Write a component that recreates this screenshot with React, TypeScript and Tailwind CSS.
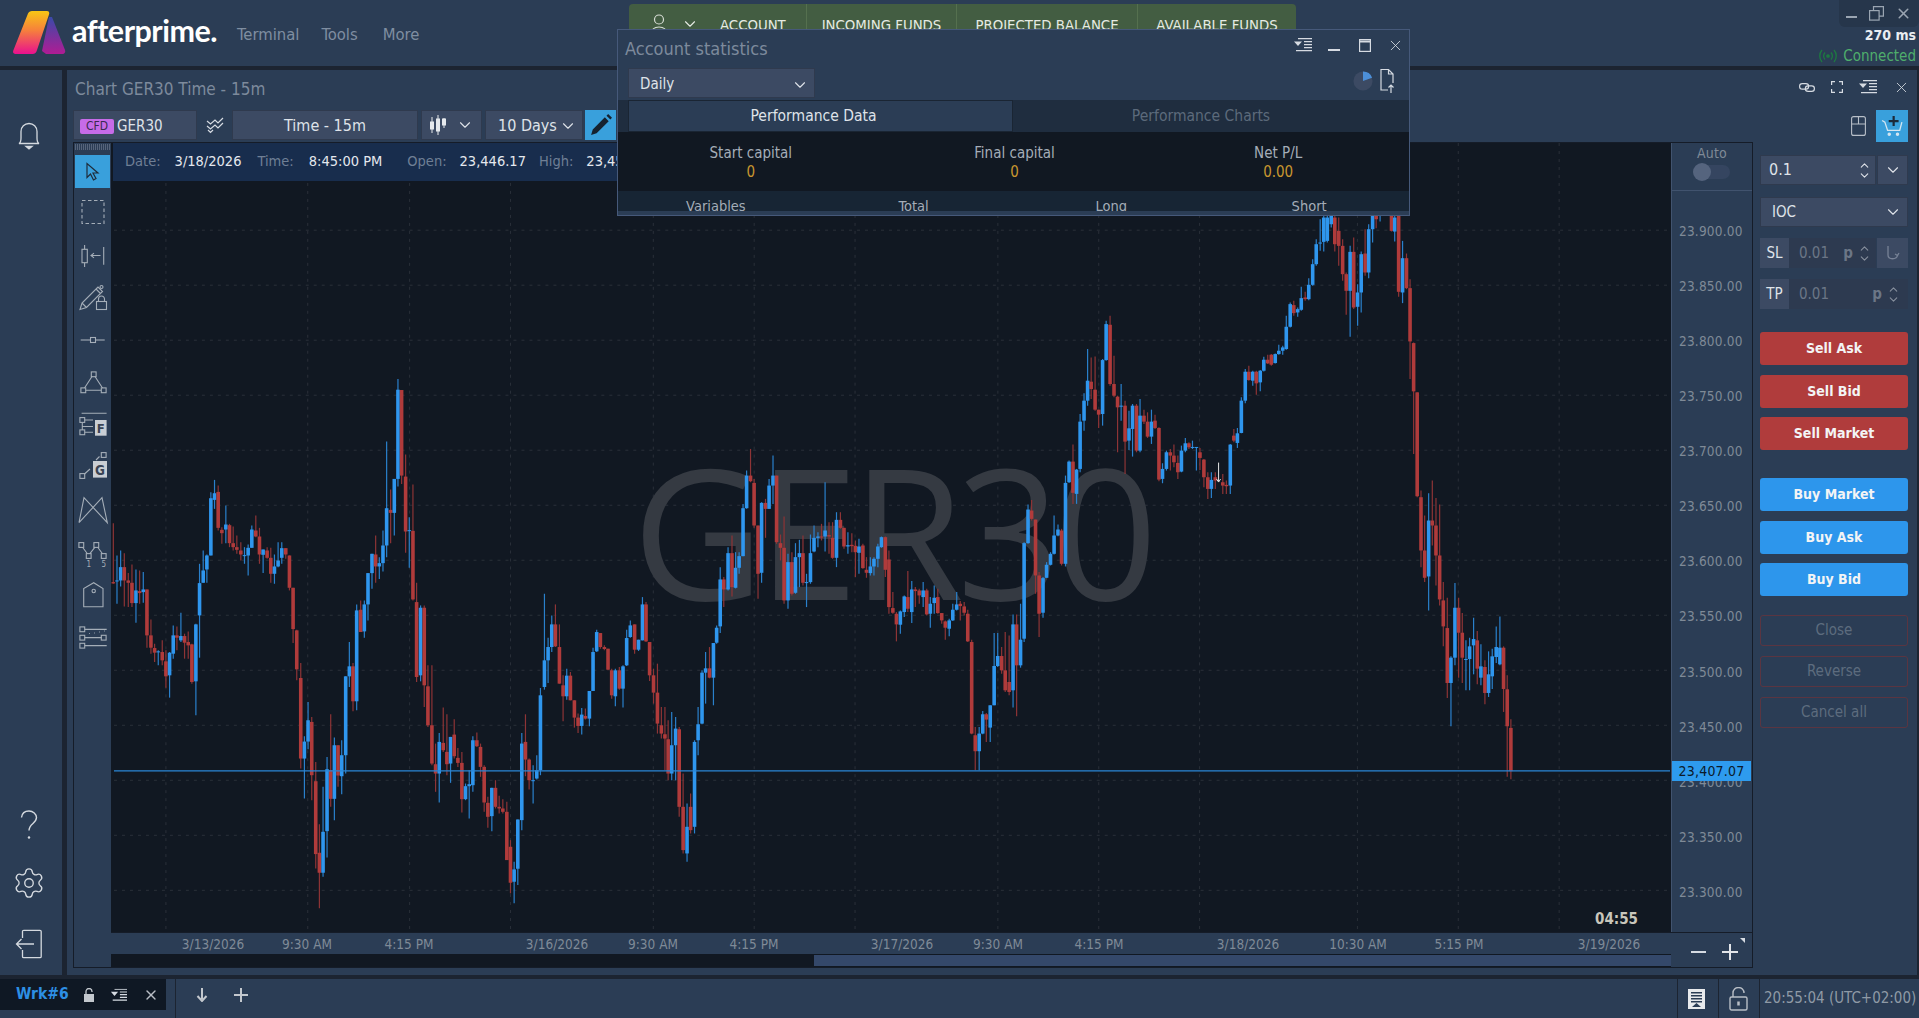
import { ChevronDown, ChevronUp, Settings, X } from 'lucide-react'
import type { ReactNode } from 'react'

// [x, blue?, top, bottom, wickTop, wickBottom], read off the reference in crop coordinates
type Row = [number, number, number, number, number, number]
type Seg = { x0: number; sx: number; y0: number; rows: Row[] }

const SEGS: Seg[] = [
  { x0: 110, sx: 3, y0: 350, rows: [
    [7,0,695,699,518,700],[18,1,690,692,615,760],[29,1,650,690,600,708],[40,0,650,690,608,768],[52,0,690,697,668,770],
    [63,0,697,758,642,770],[75,1,720,758,657,817],[86,0,722,728,660,760],[97,1,717,725,665,757],[108,0,717,855,717,892],
    [120,0,855,892,807,910],[131,0,893,907,880,935],[142,1,903,906,900,945],[154,0,905,930,870,945],[165,0,933,978,900,1012],
    [176,1,907,975,905,1042],[187,1,855,910,825,925],[198,0,855,862,828,900],[210,1,857,870,787,875],[221,0,857,877,850,925],
    [232,0,875,885,843,925],[243,0,882,995,880,1000],[255,1,822,993,820,1095],[266,1,698,795,640,922],[277,1,660,697,600,697],
    [288,1,615,657,612,697],[300,1,443,615,425,615],[311,1,428,448,388,475],[322,0,424,532,405,540],[333,0,538,548,530,580],
    [345,1,522,537,465,578],[356,0,524,578,520,590],[367,0,578,590,528,600],[378,0,590,598,555,610],[390,0,600,612,575,630],
    [401,1,614,617,590,640],[412,1,592,615,582,675],[423,1,537,592,525,592],[435,0,540,558,495,560],[446,0,558,612,532,640],
    [457,1,597,613,597,668],[469,0,600,622,590,625],[480,0,622,670,592,697],[491,1,648,670,612,700],[502,1,630,648,575,650],
    [513,1,593,622,575,640],[525,0,593,612,593,625],[536,0,615,712,615,720],[547,0,712,836,712,878],[558,0,840,957,838,990],
  ] },
  { x0: 110, sx: 3, y0: 600, rows: [
    [570,0,233,475,188,505],[581,1,424,475,408,595],[592,1,360,424,305,447],[603,0,365,525,350,600],[615,0,543,762,485,805],
    [626,0,758,818,672,925],[637,1,695,818,560,830],[649,1,507,693,470,772],[660,0,510,596,342,620],[671,1,435,596,412,660],
    [682,0,435,526,435,560],[693,1,465,528,420,582],[705,1,228,465,228,520],[716,1,198,228,125,260],[727,0,198,303,188,333],
    [738,1,30,303,12,330],[750,0,28,95,0,95],[761,1,12,93,0,112],[772,1,-82,12,-82,60],[784,1,-140,-82,-140,-35],
    [795,0,-138,-102,-195,-53],[806,1,-112,-102,-130,-64],[817,1,-165,-112,-210,-87],[828,1,-277,-165,-477,-130],[840,0,-272,-263,-333,-172],
    [851,1,-365,-263,-365,-195],[862,1,-633,-365,-665,-342],[873,0,-632,-375,-632,-350],[885,0,-372,-207,-438,-143],[896,1,-211,-209,-250,-98],
    [907,0,-209,-3,-348,0],[918,0,5,230,-53,245],[930,1,22,225,15,243],[941,0,22,255,15,320],[952,0,258,375,195,380],
    [964,0,375,490,195,495],[975,0,492,520,430,575],[986,1,425,520,398,607],[998,0,428,450,322,455],[1009,0,455,492,342,525],
    [1020,1,410,490,410,548],[1031,0,403,468,357,475],[1042,0,473,488,443,500],[1054,0,488,597,455,637],[1065,1,558,597,550,600],
    [1076,1,552,558,510,655],[1087,1,420,555,408,575],[1099,0,420,438,397,440],[1110,0,440,500,430,530],[1121,0,500,607,495,635],
    [1132,0,608,650,590,683],[1144,1,563,648,563,693],[1155,0,563,620,540,625],[1166,0,620,625,587,640],[1177,0,625,635,597,640],
    [1189,0,635,780,605,780],[1200,0,740,848,720,880],[1211,1,808,845,785,910],[1222,1,658,806,658,855],[1234,1,430,660,398,690],
    [1245,0,425,478,342,528],[1256,0,478,540,475,568],[1268,1,540,542,495,610],[1279,1,510,535,465,538],[1290,1,285,510,263,525],
    [1302,1,180,260,-20,268],[1313,1,140,180,112,248],[1324,1,72,140,45,155],[1335,0,72,138,12,140],[1347,0,140,250,72,250],
    [1358,0,255,288,225,363],[1369,1,226,288,205,298],[1380,0,226,300,215,300],[1392,0,300,352,300,382],[1403,0,352,377,340,398],
    [1414,1,343,377,323,403],[1425,0,347,355,325,358],[1437,1,272,355,272,378],[1448,1,155,272,142,272],[1459,1,95,153,88,155],
    [1470,0,98,140,98,145],[1482,0,140,146,135,150],[1493,0,145,208,145,210],[1504,0,210,285,205,295],[1515,1,210,288,205,318],
    [1527,0,210,265,200,268],[1538,1,198,265,195,322],[1549,1,113,195,88,197],[1560,1,75,110,60,112],
  ] },
  { x0: 610, sx: 2.8, y0: 440, rows: [
    [68,0,552,628,552,640],[79,1,598,628,598,632],[90,1,492,600,470,600],[100,0,492,603,485,605],[110,0,605,705,605,722],
    [121,0,705,757,685,790],[132,0,757,850,670,880],[143,0,855,880,800,895],[153,0,882,895,800,990],[162,0,897,1000,840,1020],
    [172,1,915,1000,815,1020],[183,1,865,915,830,1020],[193,0,867,1100,860,1130],[204,0,1100,1230,1000,1240],[215,1,1160,1240,1090,1265],
    [225,0,1100,1170,1060,1180],[236,1,905,1160,900,1180],[246,1,852,900,800,945],[257,1,697,850,690,852],[267,1,684,697,635,790],
    [278,0,684,712,620,714],[289,1,608,712,608,795],[298,1,562,607,555,610],[308,1,417,558,380,578],[318,0,417,447,410,500],
    [330,1,338,447,320,450],[341,0,338,440,285,468],[351,1,382,442,335,444],[361,1,347,382,335,400],[372,1,203,347,190,347],
    [382,1,105,203,90,205],[393,0,105,122,25,125],[403,0,127,255,115,262],[414,0,255,400,255,475],[424,1,187,397,185,427],
    [435,0,187,205,175,292],[445,1,135,205,115,205],[456,1,105,135,45,190],[466,0,105,305,105,310],[477,0,308,322,282,360],
    [487,0,322,480,228,490],[498,1,365,480,340,505],[509,0,365,460,335,465],[519,1,350,457,308,460],[530,1,338,350,298,440],
    [540,0,338,427,285,435],[550,1,425,428,400,500],[561,1,338,425,282,430],[571,1,292,333,255,335],[582,1,288,292,275,320],
    [592,0,288,291,250,300],[602,1,270,288,125,333],[613,0,284,288,245,340],[623,0,292,352,245,355],[634,1,238,352,215,380],
    [645,0,238,262,215,265],[655,0,262,318,262,325],[666,1,314,318,275,340],[677,0,313,317,278,335],[687,0,316,335,300,410],
    [697,1,318,337,295,400],[708,0,315,383,310,385],[718,0,388,397,350,412],[729,1,378,398,350,405],[739,1,355,378,350,405],
    [750,1,318,355,310,380],[760,1,290,320,288,322],[771,0,290,388,288,410],[781,0,357,500,330,520],[792,0,503,517,455,520],
    [802,0,520,552,515,603],[813,1,513,553,510,580],[824,1,468,515,465,530],[834,0,470,505,392,515],[845,1,447,515,422,548],
    [855,0,447,452,440,500],[866,0,450,465,445,490],[877,1,450,470,425,500],[887,0,450,522,445,525],[897,1,490,520,470,562],
    [908,1,472,488,435,520],[918,0,470,518,445,520],[929,0,518,540,518,550],[939,0,543,562,540,598],[950,1,540,565,535,588],
    [960,1,508,540,490,542],[971,1,492,508,455,510],[981,0,490,497,482,540],[992,0,498,517,485,525],[1002,0,520,603,508,605],
    [1013,0,605,880,598,882],[1023,0,885,933,860,990],[1034,1,880,933,860,990],[1044,1,822,880,812,882],[1054,0,822,838,818,905],
    [1065,1,795,862,795,905],[1076,1,677,795,578,795],[1086,1,647,677,578,680],[1097,0,647,690,620,700],[1107,0,690,750,575,755],
    [1118,0,725,755,585,765],[1129,1,552,750,522,802],[1139,0,552,675,522,828],[1150,1,598,675,490,682],[1160,1,308,595,305,605],
    [1171,1,207,308,192,310],[1181,0,210,235,178,240],[1192,0,237,405,237,460],[1202,0,405,520,395,590],[1213,1,413,517,410,532],
    [1223,1,373,412,365,412],[1234,1,340,373,335,375],[1244,1,285,340,225,342],[1255,1,267,285,252,287],[1265,0,270,370,265,375],
    [1276,1,127,370,105,378],[1286,1,63,125,60,127],[1297,0,63,157,12,190],[1307,1,87,160,85,190],
  ] },
  { x0: 960, sx: 2.8, y0: 210, rows: [
    [337,1,633,775,610,785],[348,1,570,630,548,660],[358,1,510,570,415,585],[368,0,513,535,440,565],[379,0,537,597,437,600],
    [389,0,597,612,597,652],[400,1,448,610,445,645],[410,1,340,448,330,450],[421,0,342,520,315,525],[432,0,520,555,435,560],
    [442,0,558,590,555,725],[452,1,585,588,520,630],[463,0,585,693,570,790],[474,1,653,690,600,718],[484,1,585,655,580,738],
    [495,0,585,720,580,725],[505,1,615,720,565,725],[516,0,615,633,597,640],[526,0,633,678,605,682],[537,1,633,678,597,700],
    [547,0,630,652,612,655],[558,0,652,807,650,812],[568,1,775,805,758,818],[579,1,725,775,720,780],[590,0,725,735,715,780],
    [600,0,735,755,702,770],[611,0,757,785,735,805],[621,1,720,783,705,785],[632,1,698,720,682,725],[642,0,698,710,695,715],
    [652,1,709,711,690,715],[663,1,709,711,709,780],[673,0,725,742,712,778],[684,0,747,800,745,830],[695,0,800,835,785,865],
    [705,1,808,835,785,862],[716,0,800,810,785,835],[737,0,815,825,790,850],[747,0,823,827,810,850],[758,1,702,825,700,850],
    [768,0,675,690,655,695],[778,1,668,697,652,712],[789,1,570,667,560,668],[800,1,483,570,475,578],[810,0,483,508,465,510],
    [821,1,483,510,480,525],[831,0,483,518,480,552],[842,1,480,515,478,542],[852,1,447,480,438,482],[863,0,447,458,432,460],
    [873,0,432,462,430,465],[884,1,430,457,428,458],[894,1,420,430,402,432],[905,1,410,420,405,432],[915,1,348,415,315,417],
    [926,1,280,348,275,350],[936,0,283,307,270,315],[947,1,295,305,290,318],[957,1,262,297,228,300],[968,0,260,265,243,270],
    [978,1,222,265,202,268],[989,1,160,222,145,225],[999,1,100,160,85,165],[1010,1,95,97,25,120],[1020,1,20,93,0,122],
    [1030,1,20,90,0,95],[1041,1,0,40,0,50],[1051,0,20,100,0,122],[1062,0,60,105,20,165],[1073,0,105,190,85,210],
    [1083,0,190,240,185,312],[1094,1,123,240,105,378],[1104,0,123,290,80,295],[1115,1,245,288,220,345],[1125,1,130,245,122,305],
    [1136,0,128,185,55,195],[1146,1,55,185,40,202],[1157,1,15,55,0,95],[1167,0,0,25,0,52],[1178,1,0,15,0,32],
    [1210,0,15,60,0,62],[1219,1,20,62,0,92],[1230,0,15,243,0,258],[1241,1,142,245,90,277],[1252,0,142,232,128,235],
    [1262,0,232,392,205,505],[1272,0,397,542,395,730],[1282,0,545,857,545,860],
  ] },
  { x0: 1380, sx: 3, y0: 400, rows: [
    [125,0,290,450,270,500],[136,0,450,532,345,545],[148,1,360,528,278,630],[159,0,360,375,240,435],[170,0,375,465,292,555],
    [181,0,465,597,312,615],[192,0,600,678,545,738],[204,0,683,848,592,893],[215,1,772,848,768,978],[227,1,622,772,548,795],
    [238,0,622,697,592,832],[249,0,697,772,638,848],[260,1,776,779,720,870],[271,1,738,776,712,870],[283,1,716,735,652,822],
    [294,0,720,805,692,852],[305,1,798,832,732,855],[317,0,800,878,780,912],[328,1,822,878,753,890],[339,1,768,828,745,866],
    [351,1,740,770,678,788],[362,1,742,792,648,795],[373,0,742,866,738,935],[384,0,867,978,825,1130],[395,0,983,1113,957,1137],
  ] },
]

const PRICES = ['23.900.00','23.850.00','23.800.00','23.750.00','23.700.00','23.650.00','23.600.00','23.550.00','23.500.00','23.450.00','23.400.00','23.350.00','23.300.00']
const V_GRID = [165, 307, 409, 510, 653, 754, 855, 998, 1099, 1200, 1358, 1459, 1560]
const H_GRID = PRICES.map((_, i) => 229.3 + i * 55.08)
const TIME_LABELS: [string, number][] = [
  ['3/13/2026', 213], ['9:30 AM', 307], ['4:15 PM', 409], ['3/16/2026', 557], ['9:30 AM', 653], ['4:15 PM', 754],
  ['3/17/2026', 902], ['9:30 AM', 998], ['4:15 PM', 1099], ['3/18/2026', 1248], ['10:30 AM', 1358], ['5:15 PM', 1459], ['3/19/2026', 1609],
]

function Candles() {
  return (
    <svg viewBox="111 142 1560 790" className="absolute inset-0 h-full w-full">
      {V_GRID.map((x) => (
        <line key={x} x1={x} x2={x} y1={142} y2={932} stroke="#2a3039" strokeWidth="1" strokeDasharray="3 5" />
      ))}
      {H_GRID.map((y) => (
        <line key={y} x1={113} x2={1671} y1={y} y2={y} stroke="#2a3039" strokeWidth="1" strokeDasharray="3 5" />
      ))}
    </svg>
  )
}

function CandleLayer() {
  return (
    <svg viewBox="111 142 1560 790" className="absolute inset-0 h-full w-full">
      {SEGS.flatMap((s, si) =>
        s.rows.map(([x, up, top, bot, wt, wb], i) => {
          const cx = s.x0 + x / s.sx
          const color = up ? '#2f96ee' : '#b03b3b'
          const t = s.y0 + top / 3
          const b = s.y0 + bot / 3
          return (
            <g key={`${si}-${i}`}>
              <line x1={cx} x2={cx} y1={s.y0 + wt / 3} y2={s.y0 + wb / 3} stroke={up ? '#2a80cc' : '#8e3436'} strokeWidth="1.2" />
              <rect x={cx - 1.8} y={t} width="3.6" height={Math.max(b - t, 1)} fill={color} />
            </g>
          )
        }),
      )}
      <line x1="113" x2="1671" y1="770.7" y2="770.7" stroke="#2a86d6" strokeWidth="1.3" />
      <path d="M1219 462v19m-2-2.5 2 3 2-3" fill="none" stroke="#e8e8e8" strokeWidth="1" />
    </svg>
  )
}

const toolStroke = { fill: 'none', stroke: '#a5aeb8', strokeWidth: 1.1 }

function Sq({ x, y, r = 2.4 }: { x: number; y: number; r?: number }) {
  return <rect x={x - r} y={y - r} width={r * 2} height={r * 2} {...toolStroke} />
}

const TOOLS: ReactNode[] = [
  <rect key="a" x="7" y="6.5" width="22" height="23" {...toolStroke} strokeDasharray="3.5 2.5" />,
  <g key="b" {...toolStroke}>
    <rect x="7" y="12.3" width="5.3" height="13.4" />
    <path d="M9.6 8v4.3M9.6 25.7V30M28.7 10v17.7M25.5 18.5H16m3-2.4-3 2.4 3 2.4" />
  </g>,
  <g key="c" {...toolStroke}>
    <path d="M5 30.5l2-6.5L23 8l4.5 4.5L11.5 28.5zM7 24l4.5 4.5M21 10l4.5 4.5" />
    <circle cx="26.5" cy="8" r="1.5" />
    <rect x="21.5" y="22.5" width="10" height="8" fill="#2b3d55" />
    <path d="M23.5 22.5V20a3 3 0 0 1 6 0v2.5" />
  </g>,
  <g key="d" {...toolStroke}>
    <path d="M5.7 18h24" />
    <rect x="15.5" y="15.5" width="5" height="5" fill="#2b3d55" />
  </g>,
  <g key="e" {...toolStroke}>
    <path d="M17 12.5 9.5 24M20 12.5 27.5 24M11 26.3h15" />
    <Sq x={18.7} y={10.3} />
    <Sq x={8.3} y={26.3} />
    <Sq x={28.7} y={26.3} />
  </g>,
  <g key="f">
    <g {...toolStroke}>
      <path d="M6.6 6.3h25M9.7 13H18M9.7 25.3H18M7.3 15.4v7.5M7.3 19.5H18" />
      <Sq x={7.3} y={13} />
      <Sq x={7.3} y={25.3} />
    </g>
    <rect x="20" y="13" width="11.6" height="15.7" fill="#c9ced4" />
    <text x="25.8" y="26" textAnchor="middle" fontSize="13" fontWeight="700" fill="#3a4454">F</text>
  </g>,
  <g key="g">
    <g {...toolStroke}>
      <path d="M9.5 25 15 20M21 11l3.5-3.5" />
      <Sq x={28.7} y={6} />
      <Sq x={7.3} y={27} />
    </g>
    <rect x="18" y="12" width="14" height="16.6" fill="#c9ced4" />
    <text x="25" y="25.5" textAnchor="middle" fontSize="13.5" fontWeight="700" fill="#3a4454">G</text>
  </g>,
  <path key="h" d="M4 30.7 9 5.7 32.3 30.7 27 5.7 4 30.7" {...toolStroke} />,
  <g key="i" {...toolStroke}>
    <path d="M7.6 13.2l4.8 6.6M14.7 19.8l5.3-6.6M22.7 13.2l4.8 6.6" />
    <Sq x={6.3} y={11} />
    <Sq x={13.7} y={22} />
    <Sq x={21.3} y={11} />
    <Sq x={28.7} y={22} />
    <text x="13.7" y="33" textAnchor="middle" fontSize="8" fill="#a5aeb8" stroke="none">1</text>
    <text x="28.7" y="33" textAnchor="middle" fontSize="8" fill="#a5aeb8" stroke="none">5</text>
  </g>,
  <g key="j" {...toolStroke}>
    <path d="M8.7 29.7V11.5l10-5.800 9.3 5.800v18.200z" />
    <circle cx="18.7" cy="14" r="1.7" />
  </g>,
  <g key="k" {...toolStroke}>
    <path d="M9.7 10.3h22M9.7 18.7h17M9.7 26.7h22" strokeWidth="1.3" />
    <path d="M14 14.5h.8M19 14h.8M24 13h.8M29 12h.8" />
    <Sq x={7.3} y={10.3} />
    <Sq x={7.3} y={18.7} />
    <Sq x={7.3} y={26.7} />
    <Sq x={28.7} y={18.7} />
  </g>,
]

function MenuIcon() {
  return (
    <svg viewBox="0 0 18 14" className="h-[14px] w-[18px]" fill="#d6dbe2">
      <path d="M0 3.5h8L4 8zM4 0h14v1.3H4zM10 3h8v1.3h-8zM10 6h8v1.3h-8zM10 9h8v1.3h-8zM2 12h16v1.3H2z" />
    </svg>
  )
}

function Select({ label, className }: { label: string; className: string }) {
  return (
    <div className={`flex items-center justify-between border border-[#2f3a4e] bg-[#3c4a63] ${className}`}>
      <span className="text-[15px] text-[#dfe3e9]">{label}</span>
      <ChevronDown className="h-[18px] w-[18px] text-[#dfe3e9]" strokeWidth={1.5} />
    </div>
  )
}

function Spin() {
  return (
    <div className="flex flex-col items-center text-[#dfe3e9] -space-y-[3px]">
      <ChevronUp className="h-[13px] w-[13px]" strokeWidth={2} />
      <ChevronDown className="h-[13px] w-[13px]" strokeWidth={2} />
    </div>
  )
}

function Header() {
  return (
    <header className="flex h-[66px] shrink-0 bg-[#2b3d55]">
      <svg viewBox="0 0 53 43" className="ml-[13px] mt-[11px] h-[43px] w-[53px] shrink-0">
        <defs>
          <linearGradient id="la" x1="0" y1="0" x2="0" y2="1">
            <stop offset="0" stopColor="#f7c614" />
            <stop offset="0.45" stopColor="#f6803c" />
            <stop offset="1" stopColor="#e9108f" />
          </linearGradient>
          <linearGradient id="lb" x1="0" y1="0" x2="0" y2="1">
            <stop offset="0" stopColor="#3a4aa8" />
            <stop offset="1" stopColor="#b01c94" />
          </linearGradient>
        </defs>
        <path d="M36 6h3l13 33c.8 2.2-.4 4-2.6 4H33l-4-3z" fill="url(#lb)" />
        <path d="M15 2.5C15.8 1 17 0 19 0h15c2 0 2.6 1.6 2 3.500L24 39c-.7 2.400-2 4-4.500 4H2.500C.5 43-.4 41.500.3 39.500z" fill="url(#la)" />
      </svg>
      <div className="ml-[6px] mt-[12px] h-[36px] w-[160px] font-['Lato',sans-serif] text-[30.5px] font-bold leading-[36px] tracking-[-0.5px] text-white">
        afterprime.
      </div>
      <nav className="ml-[5px] mt-[26px] flex h-[18px] w-[187px] items-center text-[16.5px] text-[#7f8ea1]">
        <span>Terminal</span>
        <span className="ml-[22px]">Tools</span>
        <span className="ml-[25px]">More</span>
      </nav>
      <div className="ml-[205px] mt-[4px] flex h-[40px] w-[667px] shrink-0 items-start rounded-t-[4px] bg-[#435d42] text-[14.8px] leading-[42px] text-[#e6ebe4]">
        <div className="flex h-full w-[178px] items-start border-r border-[#55704f]">
          <svg viewBox="0 0 20 22" className="ml-[20px] mt-[9px] h-[22px] w-[20px]" fill="none" stroke="#d7ddd5" strokeWidth="1.2">
            <circle cx="10" cy="6.5" r="4.5" />
            <path d="M2 21c.5-5 4-7 8-7s7.5 2 8 7" />
          </svg>
          <ChevronDown className="ml-[12px] mt-[11px] h-[18px] w-[18px]" strokeWidth={1.5} />
          <span className="ml-[21px]">ACCOUNT</span>
        </div>
        <div className="h-full w-[150px] border-r border-[#55704f] text-center">INCOMING FUNDS</div>
        <div className="h-full w-[181px] border-r border-[#55704f] text-center">PROJECTED BALANCE</div>
        <div className="h-full flex-1 text-center">AVAILABLE FUNDS</div>
      </div>
      <div className="ml-auto flex w-[110px] flex-col items-end">
        <div className="flex h-[27px] w-[80px] items-center justify-between rounded-bl-[6px] rounded-br-[6px] bg-[#26364b] px-[7px] text-[#9aa5b2]">
          <span className="mt-[6px] h-[2px] w-[11px] bg-[#9aa5b2]" />
          <svg viewBox="0 0 15 15" className="h-[15px] w-[15px]" fill="none" stroke="#9aa5b2" strokeWidth="1.2">
            <rect x="0.6" y="4.6" width="9.5" height="9.5" />
            <path d="M4.5 4.5V.6h9.9v9.5h-4.3" />
          </svg>
          <X className="h-[17px] w-[17px]" strokeWidth={2.2} />
        </div>
        <div className="mr-[3px] h-[16px] text-[14px] font-bold leading-[16px] text-[#e9edf1]">270 ms</div>
        <div className="mr-[3px] mt-[4px] flex h-[18px] items-center text-[15px] leading-[18px] text-[#4fae6c]">
          <svg viewBox="0 0 20 14" className="mr-[5px] h-[14px] w-[20px]" fill="none" stroke="#1d7a41" strokeWidth="1.3">
            <path d="M4 1C1 4.5 1 9.5 4 13M7 3.5c-1.6 2-1.6 5 0 7M16 1c3 3.5 3 8.5 0 12M13 3.5c1.6 2 1.6 5 0 7" />
            <circle cx="10" cy="7" r="1.2" fill="#1d7a41" />
          </svg>
          Connected
        </div>
      </div>
    </header>
  )
}

function Rail() {
  return (
    <aside className="flex w-[62px] shrink-0 flex-col items-center bg-[#2b3d55] pr-[4px] text-[#c8ced6]">
      <svg viewBox="0 0 22 28" className="mt-[52px] h-[28px] w-[22px]" fill="none" stroke="#d4d9df" strokeWidth="1.3">
        <path d="M1 21.5c2-1 2-3 2-5.500V9.5C3 5 6.5 1.5 11 1.5S19 5 19 9.5V16c0 2.500 0 4.500 2 5.500z" />
        <path d="M8 24.5h6L11 27z" fill="#d4d9df" />
      </svg>
      <svg viewBox="0 0 18 30" className="mt-auto h-[30px] w-[18px]" fill="none" stroke="#d4d9df" strokeWidth="1.4">
        <path d="M1.5 7.5C2 3.5 5 1 9 1s7.5 3 7.5 6.5c0 6-7.5 6-7.5 13" />
        <circle cx="9" cy="27.5" r="1.2" fill="#d4d9df" stroke="none" />
      </svg>
      <Settings className="mt-[26px] h-[34px] w-[34px] text-[#d4d9df]" strokeWidth={0.95} />
      <svg viewBox="0 0 28 30" className="mb-[16px] mt-[29px] h-[30px] w-[28px]" fill="none" stroke="#d4d9df" strokeWidth="1.3">
        <path d="M7.5 9V2.5c0-.8.5-1.200 1.200-1.200H25c.8 0 1.200.5 1.200 1.200v25c0 .8-.5 1.200-1.200 1.200H8.700c-.7 0-1.200-.5-1.200-1.200V21" />
        <path d="M19 15H1.5m5-5-5 5 5 5" />
      </svg>
    </aside>
  )
}

function TradeButton({ label, tone }: { label: string; tone: 'red' | 'blue' }) {
  return (
    <div className={`flex h-[33px] items-center justify-center rounded-[3px] text-[14px] font-bold text-[#f3f4f5] ${tone === 'red' ? 'bg-[#b03c3c]' : 'bg-[#2d96ec]'}`}>
      {label}
    </div>
  )
}

function GhostButton({ label }: { label: string }) {
  return (
    <div className="flex h-[31px] items-center justify-center rounded-[3px] border border-[#5a3541] text-[15px] text-[#5d6c7e]">
      {label}
    </div>
  )
}

function TradePanel() {
  return (
    <div className="flex w-[164px] shrink-0 flex-col pl-[7px] pr-[9px]">
      <div className="flex h-[32px] items-center justify-end">
        <svg viewBox="0 0 15 20" className="mr-[10px] h-[20px] w-[15px]" fill="none" stroke="#b8bfc8" strokeWidth="1.1">
          <rect x="0.6" y="0.6" width="13.8" height="18.8" rx="2" />
          <path d="M0.6 8h13.8M7.5 0.6V8" />
        </svg>
        <div className="flex h-[32px] w-[32px] items-center justify-center bg-[#39a0dc]">
          <svg viewBox="0 0 20 20" className="h-[22px] w-[22px]" fill="none" stroke="#d3e6f2" strokeWidth="1.2">
            <path d="M1 5l2.5 1.5L6 14h11l2-7.5" />
            <circle cx="7.5" cy="17.5" r="1" fill="#d3e6f2" />
            <circle cx="15" cy="17.5" r="1" fill="#d3e6f2" />
            <path d="M11.5 1v9M7 5.5h9" stroke="#1c2a3a" strokeWidth="2" />
          </svg>
        </div>
      </div>
      <div className="mt-[13px] flex h-[30px] gap-[1px]">
        <div className="flex w-[116px] items-center justify-between border border-[#2f3a4e] bg-[#3c4a63] pl-[8px] pr-[4px] text-[16px] text-[#dfe3e9]">
          0.1
          <Spin />
        </div>
        <div className="flex flex-1 items-center justify-center border border-[#2f3a4e] bg-[#3c4a63] text-[#dfe3e9]">
          <ChevronDown className="h-[18px] w-[18px]" strokeWidth={1.5} />
        </div>
      </div>
      <Select label="IOC" className="mt-[12px] h-[30px] pl-[11px] pr-[5px]" />
      <div className="mt-[11px] flex h-[30px]">
        <div className="flex w-[29px] items-center justify-center bg-[#3c4a63] text-[15px] text-[#dfe3e9]">SL</div>
        <div className="flex w-[87px] items-center bg-[#2d3a50] pl-[10px] pr-[5px] text-[15px] text-[#6b7686]">
          <span>0.01</span>
          <span className="ml-auto mr-[5px] font-bold">p</span>
          <div className="opacity-50"><Spin /></div>
        </div>
        <div className="ml-[1px] flex flex-1 items-center justify-center bg-[#3c4a63]">
          <svg viewBox="0 0 14 16" className="h-[16px] w-[14px]" fill="none" stroke="#778296" strokeWidth="1.3">
            <path d="M2 1v9c0 5 9 5 9.5 0M9 9l2.5 1.5L13 8" />
          </svg>
        </div>
      </div>
      <div className="mt-[11px] flex h-[30px]">
        <div className="flex w-[29px] items-center justify-center bg-[#3c4a63] text-[15px] text-[#dfe3e9]">TP</div>
        <div className="flex flex-1 items-center bg-[#2d3a50] pl-[10px] pr-[8px] text-[15px] text-[#6b7686]">
          <span>0.01</span>
          <span className="ml-auto mr-[5px] font-bold">p</span>
          <div className="opacity-50"><Spin /></div>
        </div>
      </div>
      <div className="mt-[23px] flex flex-col gap-[9.5px]">
        <TradeButton label="Sell Ask" tone="red" />
        <TradeButton label="Sell Bid" tone="red" />
        <TradeButton label="Sell Market" tone="red" />
      </div>
      <div className="mt-[28px] flex flex-col gap-[9.5px]">
        <TradeButton label="Buy Market" tone="blue" />
        <TradeButton label="Buy Ask" tone="blue" />
        <TradeButton label="Buy Bid" tone="blue" />
      </div>
      <div className="mt-[19px] flex flex-col gap-[10px]">
        <GhostButton label="Close" />
        <GhostButton label="Reverse" />
        <GhostButton label="Cancel all" />
      </div>
    </div>
  )
}

function StatsWindow() {
  return (
    <section className="absolute left-[617px] top-[29px] z-20 flex h-[187px] w-[793px] flex-col border border-[#46597a] bg-[#2b3d55]">
      <div className="flex h-[38px] shrink-0 items-center justify-between pl-[7px]">
        <span className="-mt-[2px] text-[18px] text-[#7d8a9c]">Account statistics</span>
        <div className="-mr-[2px] -mt-[8px] flex items-center text-[#d6dbe2]">
          <div className="flex w-[31px] justify-center"><MenuIcon /></div>
          <div className="flex w-[31px] justify-center"><span className="mt-[9px] h-[2px] w-[12px] bg-[#d6dbe2]" /></div>
          <div className="flex w-[31px] justify-center">
            <svg viewBox="0 0 12 13" className="h-[13px] w-[12px]" fill="none" stroke="#d6dbe2" strokeWidth="1.2">
              <rect x="0.6" y="0.6" width="10.8" height="11.8" />
              <path d="M0.6 2.5h10.8" strokeWidth="2" />
            </svg>
          </div>
          <div className="flex w-[31px] justify-center"><X className="h-[17px] w-[17px]" strokeWidth={1.2} /></div>
        </div>
      </div>
      <div className="flex h-[31px] shrink-0 items-start justify-between pl-[10px] pr-[14px]">
        <Select label="Daily" className="h-[30px] w-[187px] pl-[11px] pr-[5px] pt-[3px]" />
        <div className="flex items-center gap-[6px]">
          <svg viewBox="0 0 22 28" className="h-[26px] w-[20px]">
            <circle cx="11" cy="14" r="10.5" fill="#3c4a63" />
            <path d="M11 3.5A10.5 10.5 0 0 1 21 10.5L11 14z" fill="#4c8fd8" />
          </svg>
          <svg viewBox="0 0 16 26" className="h-[26px] w-[16px]" fill="none" stroke="#d6dbe2" strokeWidth="1.2">
            <path d="M9 22H2V1.5h7.5L14 6v9M9.5 1.5V6H14M12 25v-8m-2.5 2.5L12 17l2.5 2.5" />
          </svg>
        </div>
      </div>
      <div className="mt-[1px] flex h-[32px] shrink-0 bg-[#1f2d3f] pl-[10px]">
        <div className="flex w-[385px] items-center justify-center border border-[#1a2533] bg-[#2b3d55] pr-[14px] pt-[2px] text-[15.5px] text-[#dfe3e9]">
          Performance Data
        </div>
        <div className="flex flex-1 items-center justify-center pr-[20px] pt-[2px] text-[15.5px] text-[#5c6a7b]">Performance Charts</div>
      </div>
      <div className="grid h-[59px] shrink-0 grid-cols-3 bg-[#111822] pt-[12px] text-center text-[15px] leading-[19px] text-[#a4adb8]">
        {[['Start capital', '0'], ['Final capital', '0'], ['Net P/L', '0.00']].map(([k, v]) => (
          <div key={k} className="pl-[2px]">
            <div>{k}</div>
            <div className="text-[#c8962f]">{v}</div>
          </div>
        ))}
      </div>
      <div className="grid h-[20px] shrink-0 grid-cols-4 overflow-hidden bg-[#172534] pt-[6px] text-center text-[14.5px] leading-[19px] text-[#a4adb8]">
        {['Variables', 'Total', 'Long', 'Short'].map((t) => (
          <div key={t} className="-ml-[2px]">{t}</div>
        ))}
      </div>
    </section>
  )
}

function ChartToolbar() {
  return (
    <div className="mb-[2px] flex h-[30px] shrink-0 text-[15px] text-[#dfe3e9]">
      <div className="flex w-[124px] items-center border border-[#2f3a4e] bg-[#3c4a63] pl-[6px] pt-[2px]">
        <span className="rounded-[2px] bg-[#c76be8] px-[6px] text-[12px] leading-[15px] text-[#3b2a50]">CFD</span>
        <span className="ml-[3px]">GER30</span>
      </div>
      <div className="flex w-[35px] items-center justify-center">
        <svg viewBox="0 0 18 18" className="h-[18px] w-[18px]" fill="none" stroke="#d6dbe2" strokeWidth="1.2">
          <path d="M1 5l3.500 3L9 4l3 3 5-5M1 10l3.500 3L9 9l3 3 5-5M2 14l2.500 2.500L7 14" />
        </svg>
      </div>
      <div className="flex w-[186px] items-center justify-center border border-[#2f3a4e] bg-[#3c4a63] pt-[2px] text-[16px]">Time - 15m</div>
      <div className="ml-[3px] flex w-[61px] items-center justify-center gap-[9px] border border-[#2f3a4e] bg-[#3c4a63]">
        <svg viewBox="0 0 18 20" className="h-[20px] w-[18px]" fill="#e6e9ed" stroke="#e6e9ed" strokeWidth="1">
          <path d="M3 2v16M9 0v20M15 3v10" />
          <rect x="1.5" y="7" width="3" height="7" />
          <rect x="7.5" y="4" width="3" height="12" />
          <rect x="13.5" y="4" width="3" height="6" />
        </svg>
        <ChevronDown className="h-[18px] w-[18px]" strokeWidth={1.5} />
      </div>
      <div className="ml-[3px] flex w-[98px] items-center justify-between border border-[#2f3a4e] bg-[#3c4a63] pl-[12px] pr-[5px] pt-[2px] text-[16px]">
        10 Days
        <ChevronDown className="h-[18px] w-[18px]" strokeWidth={1.5} />
      </div>
      <div className="ml-[2px] flex w-[31px] items-center justify-center bg-[#39a0dc]">
        <svg viewBox="0 0 20 20" className="h-[22px] w-[22px]" fill="#16222f">
          <path d="M1 19l1.5-5L13.5 3l3.500 3.500L6 17.500zM15 1.500 16.500 0 20 3.500 18.500 5z" />
        </svg>
      </div>
    </div>
  )
}

function Plot() {
  return (
    <div className="relative flex-1 bg-[#111822]">
      <Candles />
      <div className="absolute left-[521px] top-[295px] font-['Open_Sans',sans-serif] text-[182px] leading-none tracking-[-7px] text-[#353a42] [font-stretch:normal]">GER30</div>
      <CandleLayer />
      <div className="absolute left-[2px] top-0 flex h-[38px] w-[640px] items-center bg-[#182d4d] pl-[12px] text-[14.5px] text-[#e4e8ee]">
        <span className="text-[#6f7f95]">Date:</span>
        <span className="ml-[14px]">3/18/2026</span>
        <span className="ml-[16px] text-[#6f7f95]">Time:</span>
        <span className="ml-[15px]">8:45:00 PM</span>
        <span className="ml-[25px] text-[#6f7f95]">Open:</span>
        <span className="ml-[13px]">23,446.17</span>
        <span className="ml-[13px] text-[#6f7f95]">High:</span>
        <span className="ml-[13px]">23,459.31</span>
      </div>
      <div className="absolute bottom-[2px] right-[33px] text-[15px] font-bold text-[#c9c6bb]">04:55</div>
    </div>
  )
}

function PriceScale() {
  return (
    <div className="relative w-[81px] shrink-0 border-l border-[#41536e] bg-[#2b3d55] text-[13.5px] tracking-[0.2px] text-[#7f8a97]">
      <div className="flex h-[48px] flex-col items-center border-b border-[#41536e] pt-[2px]">
        <span className="text-[14px] leading-[16px]">Auto</span>
        <div className="relative mt-[4px] h-[14px] w-[36px] rounded-full bg-[#354560]">
          <div className="absolute -left-[1px] -top-[2px] h-[18px] w-[18px] rounded-full bg-[#55647e]" />
        </div>
      </div>
      {PRICES.map((p, i) => (
        <div key={p} className={`flex h-[55.08px] items-center pl-[7px] ${i === 0 ? 'mt-[12.5px]' : ''}`}>
          {p}
        </div>
      ))}
      <div className="absolute left-0 top-[618px] flex h-[20px] w-[79px] items-center justify-center bg-[#2e9bee] text-[14px] text-[#0c1a2a]">
        23,407.07
      </div>
    </div>
  )
}

function TimeAxis() {
  return (
    <div className="relative h-[21px] bg-[#2b3d55] text-[13.5px] text-[#7f8a97]">
      {TIME_LABELS.map(([t, x], i) => (
        <span key={i} className="absolute top-[1px] -translate-x-1/2 whitespace-nowrap leading-[21px]" style={{ left: x - 111 }}>
          {t}
        </span>
      ))}
    </div>
  )
}

function ChartFrame() {
  return (
    <div className="flex h-[826px] border border-[#151c28]">
      <div className="flex w-[37px] shrink-0 flex-col">
        <div className="mx-[1px] mt-[1px] h-[6px] bg-[repeating-linear-gradient(90deg,#56647a_0_1px,transparent_1px_2px)]" />
        <div className="ml-[1px] mr-[1px] mt-[5px] flex h-[33px] items-center justify-center bg-[#39a0dc]">
          <svg viewBox="0 0 16 20" className="h-[20px] w-[16px]" fill="none" stroke="#1f2c3a" strokeWidth="1.2">
            <path d="M2 1.5v14l3.5-3.5 3 6 2.5-1.5-3-5.500h5z" />
          </svg>
        </div>
        <div className="mt-[3px] flex flex-col">
          {TOOLS.map((icon, i) => (
            <div key={i} className="flex h-[42.5px] items-center justify-center">
              <svg viewBox="0 0 36 36" className="h-[36px] w-[36px]">{icon}</svg>
            </div>
          ))}
        </div>
      </div>
      <div className="flex min-w-0 flex-1 flex-col">
        <div className="flex h-[790px] border-b border-[#151c28]">
          <Plot />
          <PriceScale />
        </div>
        <div className="flex flex-1">
          <div className="flex flex-1 flex-col">
            <TimeAxis />
            <div className="flex flex-1 justify-end bg-[#111822] py-[1px]">
              <div className="w-[857px] bg-[#34486a]" />
            </div>
          </div>
          <div className="relative flex w-[81px] shrink-0 items-start justify-center gap-[16px] bg-[#2b3d55] pl-[6px] pt-[11px]">
            <span className="mt-[7px] h-[2px] w-[15px] bg-[#d6dbe2]" />
            <svg viewBox="0 0 16 16" className="h-[16px] w-[16px]" fill="#e2e5e9">
              <path d="M7 0h2v7h7v2H9v7H7V9H0V7h7z" />
            </svg>
            <span className="absolute right-[7px] top-[5px] h-0 w-0 border-l-[5px] border-t-[5px] border-l-transparent border-t-[#d6dbe2]" />
          </div>
        </div>
      </div>
    </div>
  )
}

function Footer() {
  return (
    <footer className="mt-[4px] flex h-[39px] shrink-0 bg-[#2b3d55]">
      <div className="flex h-[31px] w-[166px] items-center bg-[#0f1824] pl-[16px]">
        <span className="text-[15.5px] font-bold text-[#2d8fe4]">Wrk#6</span>
        <svg viewBox="0 0 12 14" className="ml-[14px] h-[14px] w-[12px]" fill="#c3c8ce">
          <path d="M1 6h10v8H1z" />
          <path d="M3 6V3.5a3 3 0 0 1 6 0V4" fill="none" stroke="#c3c8ce" strokeWidth="1.3" />
        </svg>
        <div className="ml-[15px] scale-90"><MenuIcon /></div>
        <X className="ml-[15px] h-[16px] w-[16px] text-[#b9bec5]" strokeWidth={2} />
      </div>
      <div className="flex w-[10px] border-r border-[#1c2431]" />
      <svg viewBox="0 0 12 14" className="ml-[20px] mt-[9px] h-[14px] w-[12px]" fill="none" stroke="#c3c8ce" strokeWidth="2">
        <path d="M6 0v11M1.5 8 6 13l4.5-5" />
      </svg>
      <svg viewBox="0 0 14 14" className="ml-[26px] mt-[9px] h-[14px] w-[14px]" fill="#c3c8ce">
        <path d="M6 0h2v6h6v2H8v6H6V8H0V6h6z" />
      </svg>
      <div className="ml-auto flex h-full">
        <div className="flex w-[41px] items-center justify-center border-l border-[#1c2431] pr-[3px]">
          <svg viewBox="0 0 17 20" className="h-[20px] w-[17px]" fill="#e8eaed">
            <path d="M0 0h17v20H0zM3 3v1.5h11V3zM3 6v1.5h11V6zM3 9v1.5h11V9zM3 12v1.5h11V12zM8.5 14 4 18h9z" fillRule="evenodd" />
          </svg>
        </div>
        <div className="flex w-[41px] items-center justify-center border-l border-[#1c2431] pr-[2px]">
          <svg viewBox="0 0 19 24" className="h-[24px] w-[19px]" fill="none" stroke="#b8bec6" strokeWidth="1.4">
            <rect x="1" y="10" width="17" height="13" rx="1.5" />
            <path d="M4 10V6a5.500 5.500 0 0 1 11 0" />
            <path d="M9.5 14.500v4" strokeWidth="2.5" />
          </svg>
        </div>
        <div className="flex w-[160px] items-center border-l border-[#1c2431] pl-[4px] text-[15px] text-[#8f9aa6]">
          20:55:04 (UTC+02:00)
        </div>
      </div>
    </footer>
  )
}

export default function App() {
  return (
    <div className="relative flex h-[1018px] w-[1919px] flex-col overflow-hidden bg-[#1c2431] font-['DejaVu_Sans_Condensed','DejaVu_Sans',sans-serif] [font-stretch:condensed]">
      <Header />
      <div className="mt-[4px] flex h-[905px] shrink-0">
        <Rail />
        <main className="ml-[5px] flex w-[1850px] flex-col bg-[#2b3d55]">
          <div className="flex h-[40px] shrink-0 items-center justify-between pl-[8px] pr-[7px]">
            <span className="text-[17px] text-[#7d8a9c]">Chart GER30 Time - 15m</span>
            <div className="-mt-[6px] flex items-center gap-[16px] text-[#d6dbe2]">
              <svg viewBox="0 0 16 9" className="h-[9px] w-[16px]" fill="none" stroke="#d6dbe2" strokeWidth="1.2">
                <rect x="0.6" y="0.6" width="9" height="5.5" rx="2.7" />
                <rect x="6.4" y="2.9" width="9" height="5.5" rx="2.7" />
              </svg>
              <svg viewBox="0 0 12 12" className="h-[12px] w-[12px]" fill="none" stroke="#d6dbe2" strokeWidth="1.2">
                <path d="M4 .6H.6V4M8 .6h3.4V4M4 11.4H.6V8M8 11.4h3.4V8" />
              </svg>
              <MenuIcon />
              <X className="h-[17px] w-[17px]" strokeWidth={1.2} />
            </div>
          </div>
          <div className="flex flex-1 pl-[6px]">
            <div className="flex w-[1680px] shrink-0 flex-col">
              <ChartToolbar />
              <ChartFrame />
            </div>
            <TradePanel />
          </div>
        </main>
      </div>
      <Footer />
      <StatsWindow />
    </div>
  )
}
